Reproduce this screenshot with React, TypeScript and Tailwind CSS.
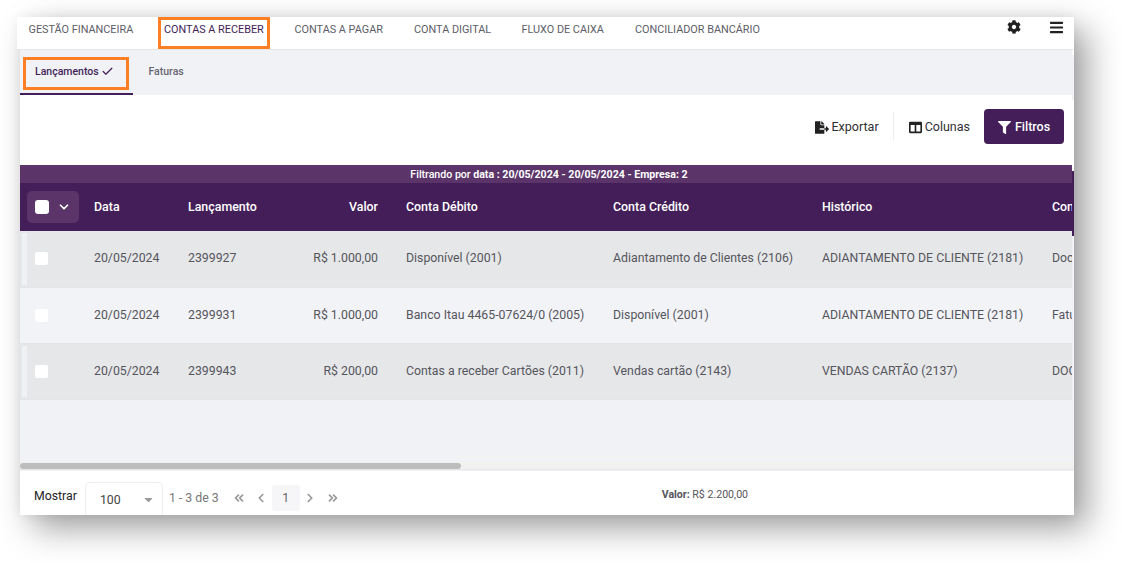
import { ChevronDown, ChevronLeft, ChevronRight, ChevronsLeft, ChevronsRight, Check } from "lucide-react";
import { FaCog, FaFileExport, FaFilter, FaBars, FaCaretDown, FaColumns } from "react-icons/fa";

const nav = ["GESTÃO FINANCEIRA", "CONTAS A RECEBER", "CONTAS A PAGAR", "CONTA DIGITAL", "FLUXO DE CAIXA", "CONCILIADOR BANCÁRIO"];
const navW = ["w-[135.5px]", "w-[130.5px]", "w-[119.5px]", "w-[107.5px]", "w-[113.5px]", "w-[150px]"];
const cols = "grid grid-cols-[74px_94px_94px_124px_207px_209px_230px_60px] items-center";

const rows = [
  { d: "20/05/2024", l: "2399927", v: "R$ 1.000,00", a: "Disponível (2001)", b: "Adiantamento de Clientes (2106)", h: "ADIANTAMENTO DE CLIENTE (2181)", c: "Doc", dark: true, h2: "h-[57px] pb-[1px]" },
  { d: "20/05/2024", l: "2399931", v: "R$ 1.000,00", a: "Banco Itau 4465-07624/0 (2005)", b: "Disponível (2001)", h: "ADIANTAMENTO DE CLIENTE (2181)", c: "Fatu", dark: false, h2: "h-[56px]" },
  { d: "20/05/2024", l: "2399943", v: "R$ 200,00", a: "Contas a receber Cartões (2011)", b: "Vendas cartão (2143)", h: "VENDAS CARTÃO (2137)", c: "DOC", dark: true, h2: "h-[56px]" },
];

export default function App() {
  return (
    <div className="w-[1122px] h-[563px] bg-white overflow-hidden pt-[17px] pl-[20px]" style={{ fontFamily: "Roboto, sans-serif" }}>
      <div className="relative w-[1054px] h-[498px] bg-white flex flex-col shadow-[13px_13px_32px_rgba(0,0,0,0.38),0_0_12px_rgba(0,0,0,0.07)]">
        {/* top nav */}
        <div className="-ml-[3px] relative h-[33px] shrink-0 flex items-start border-b border-[#e6e6e9] bg-white">
          <div className="flex pl-[11.5px] pt-[1px]">
            {nav.map((n, i) => (
              <div key={n} className={`${navW[i]} h-[24px] flex items-center whitespace-nowrap text-[10.85px] ${i === 1 ? "text-[#431e58]" : "text-[#5d5d68]"}`}>{n}</div>
            ))}
          </div>
          <div className="ml-auto flex items-center gap-[29px] pr-[11px] h-[20px] text-[#222]">
            <FaCog className="w-[14px] h-[14px]" />
            <FaBars className="w-[13px] h-[15px]" />
          </div>
        </div>
        {/* sub nav */}
        <div className="h-[45px] shrink-0 bg-[#f1f2f6] flex">
          <div className="w-[113px] h-full border-b-2 border-[#431e58] flex items-center pl-[15px] gap-[2px] text-[10.5px] font-medium text-[#431e58]">
            Lançamentos <Check className="w-[13px] h-[13px]" strokeWidth={2.2} />
          </div>
          <div className="ml-[15.5px] flex items-center pb-[1px] text-[10.5px] font-medium text-[#666672]">Faturas</div>
        </div>
        {/* toolbar */}
        <div className="h-[70px] shrink-0 bg-white flex items-start justify-end pr-[10px] pt-[14px] text-[#2f2f35]">
          <div className="h-[35px] pt-[1px] flex items-center text-[12.5px] gap-[3px]">
            <FaFileExport className="w-[14px] h-[13px] text-[#222]" /> Exportar
          </div>
          <div className="w-px h-[28px] mt-[3px] bg-[#ececef] ml-[14px] mr-[15px]" />
          <div className="h-[35px] pt-[1px] flex items-center text-[12.5px] gap-[3px]">
            <FaColumns className="w-[13px] h-[13px] text-[#222]" /> Colunas
          </div>
          <div className="ml-[14px] w-[80px] h-[35px] pt-[1px] rounded-[4px] bg-[#431e58] text-white flex items-center justify-center gap-[4px] text-[12.5px] font-medium">
            <FaFilter className="w-[13px] h-[13px]" /> Filtros
          </div>
        </div>
        {/* filter strip */}
        <div className="mr-[2px] h-[18px] shrink-0 bg-[#5b3569] text-white flex items-center justify-center text-[10.6px] pl-[6px] pt-[1px]">
          <span className="font-medium">Filtrando por&nbsp;</span>
          <span className="font-bold">data : 20/05/2024 - 20/05/2024 - Empresa: 2</span>
        </div>
        {/* table */}
        <div className="flex-1 min-h-0 bg-[#f1f2f6] overflow-hidden flex flex-col">
          <div className="mr-[2px] flex-1 min-h-0 overflow-hidden flex flex-col">
            <div className={`${cols} h-[48px] shrink-0 bg-[#431e58] text-white text-[12.4px] font-medium`}>
              <div className="ml-[7px] w-[52px] h-[32px] rounded-[5px] bg-[#5b3569] flex items-center pl-[8px] gap-[8px]">
                <div className="w-[14px] h-[14px] rounded-[3px] bg-white" />
                <ChevronDown className="w-[14px] h-[14px]" strokeWidth={3} />
              </div>
              <div>Data</div>
              <div>Lançamento</div>
              <div className="text-right pr-[28px]">Valor</div>
              <div>Conta Débito</div>
              <div>Conta Crédito</div>
              <div>Histórico</div>
              <div className="whitespace-nowrap">Con</div>
            </div>
            {rows.map((r) => (
              <div key={r.l} className={`${cols} ${r.h2} shrink-0 relative border-b border-[#e4e5e8] text-[12.3px] text-[#55555c] ${r.dark ? "bg-[#e6e7e9]" : "bg-[#f2f3f7]"}`}>
                {r.dark && <div className="absolute left-[2px] top-[2px] bottom-[2px] w-[5px] bg-[#f0f1f4]" />}
                <div className="ml-[15px] w-[13px] h-[13px] rounded-[2px] bg-white" />
                <div>{r.d}</div>
                <div>{r.l}</div>
                <div className="text-right pr-[28px]">{r.v}</div>
                <div className="whitespace-nowrap">{r.a}</div>
                <div className="whitespace-nowrap">{r.b}</div>
                <div className="whitespace-nowrap">{r.h}</div>
                <div className="whitespace-nowrap">{r.c}</div>
              </div>
            ))}
            <div className="flex-1" />
          </div>
          <div className="h-[8px] shrink-0 bg-[#f1f1ef] mb-[1px] border-b border-[#e6e6e9] pt-[1px]">
            <div className="w-[441px] h-[6px] rounded-[4px] bg-[#bdbdbd]" />
          </div>
          <div className="h-[44px] shrink-0 bg-white flex items-start text-[12.3px] overflow-hidden">
            <div className="ml-[14px] mt-[17px] text-[#222] leading-[16px]">Mostrar</div>
            <div className="ml-[8px] mt-[11px] w-[78px] h-[40px] border border-[#eeeef0] rounded-[4px] flex items-start pl-[14px] pt-[8px] text-[#444]">
              100
              <FaCaretDown className="ml-auto mr-[7px] mt-[2px] w-[13px] h-[13px] text-[#999]" />
            </div>
            <div className="ml-[6px] mt-[18px] text-[#777]">1 - 3 de 3</div>
            <div className="ml-[13px] mt-[14px] flex items-center text-[#999]">
              <ChevronsLeft className="w-[14px] h-[14px]" strokeWidth={3} />
              <ChevronLeft className="ml-[8px] w-[14px] h-[14px]" strokeWidth={3} />
              <div className="ml-[4px] w-[28px] h-[26px] rounded-[3px] bg-[#f6f6f8] flex items-center justify-center text-[#666]">1</div>
              <ChevronRight className="ml-[3px] w-[14px] h-[14px]" strokeWidth={3} />
              <ChevronsRight className="ml-[9px] w-[14px] h-[14px]" strokeWidth={3} />
            </div>
            <div className="ml-[322px] mt-[16px] text-[10.6px] text-[#55555c]"><span className="font-bold">Valor:</span> R$ 2.200,00</div>
          </div>
        </div>
        {/* small offsets at the right edge of the panels */}
        <div className="absolute right-0 top-[33px] w-[2px] h-[5px] bg-white" />
        <div className="absolute right-0 top-[78px] w-[2px] h-[5px] bg-[#f1f2f6]" />
        <div className="absolute right-0 top-[154px] w-[2px] h-[65px] bg-[#431e58]" />
        {/* highlight boxes */}
        <div className="absolute left-[138px] top-0 w-[112px] h-[32px] border-[3px] border-[#fd7e23]" />
        <div className="absolute left-[3px] top-[40px] w-[106px] h-[33px] border-[3px] border-[#fd7e23]" />
      </div>
    </div>
  );
}
